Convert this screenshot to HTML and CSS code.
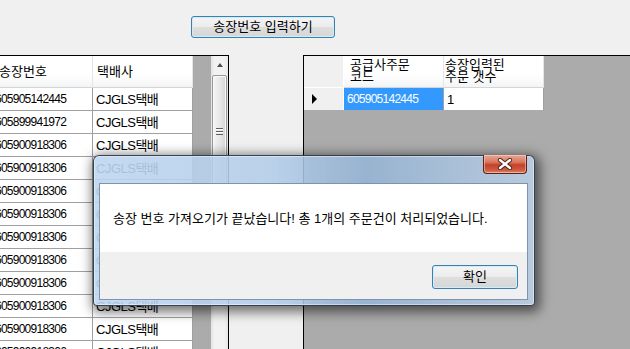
FILE: index.html
```html
<!doctype html>
<html>
<head>
    <title>송장번호 입력</title>

    <link rel="stylesheet" href="styles.css">
</head>
<body>
    <div class="toolbar">
      <button class="win-btn" id="btn-input">송장번호 입력하기</button>
    </div>

    <div class="panels">
      <div class="grid grid-left">
        <div class="grid-table">
          <div class="row head">
            <div class="cell c1">송장번호</div>
            <div class="cell c2">택배사</div>
          </div>
          <div class="row"><div class="cell c1">605905142445</div><div class="cell c2">CJGLS택배</div></div>
          <div class="row"><div class="cell c1">605899941972</div><div class="cell c2">CJGLS택배</div></div>
          <div class="row"><div class="cell c1">605900918306</div><div class="cell c2">CJGLS택배</div></div>
          <div class="row"><div class="cell c1">605900918306</div><div class="cell c2">CJGLS택배</div></div>
          <div class="row"><div class="cell c1">605900918306</div><div class="cell c2">CJGLS택배</div></div>
          <div class="row"><div class="cell c1">605900918306</div><div class="cell c2">CJGLS택배</div></div>
          <div class="row"><div class="cell c1">605900918306</div><div class="cell c2">CJGLS택배</div></div>
          <div class="row"><div class="cell c1">605900918306</div><div class="cell c2">CJGLS택배</div></div>
          <div class="row"><div class="cell c1">605900918306</div><div class="cell c2">CJGLS택배</div></div>
          <div class="row"><div class="cell c1">605900918306</div><div class="cell c2">CJGLS택배</div></div>
          <div class="row"><div class="cell c1">605900918306</div><div class="cell c2">CJGLS택배</div></div>
          <div class="row"><div class="cell c1">605900918306</div><div class="cell c2">CJGLS택배</div></div>
        </div>
        <div class="grid-fill"></div>
        <div class="scrollbar">
          <div class="sb-arrow"></div>
          <div class="sb-thumb">
            <div class="sb-grip"></div>
          </div>
        </div>
      </div>

      <div class="grid grid-right">
        <div class="grid-table">
          <div class="row head">
            <div class="cell rh"></div>
            <div class="cell c1 two">공급사주문<br>코드</div>
            <div class="cell c2 two">송장입력된<br>주문 갯수</div>
          </div>
          <div class="row">
            <div class="cell rh"><span class="arrow"></span></div>
            <div class="cell c1 selected">605905142445</div>
            <div class="cell c2">1</div>
          </div>
        </div>
      </div>
    </div>

    <div class="dialog">
      <div class="close-btn">
        <svg width="16" height="12" viewBox="0 0 16 12">
          <path d="M3 2 L13 10 M13 2 L3 10" stroke="#4a2018" stroke-width="4.2" stroke-linecap="round"/>
          <path d="M3 2 L13 10 M13 2 L3 10" stroke="#ffffff" stroke-width="2.4" stroke-linecap="round"/>
        </svg>
      </div>
      <div class="dialog-client">
        <div class="dialog-msg">송장 번호 가져오기가 끝났습니다! 총 1개의 주문건이 처리되었습니다.</div>
        <div class="dialog-foot">
          <button class="win-btn ok-btn">확인</button>
        </div>
      </div>
    </div>
</body>
</html>
```

FILE: styles.css
```css
* {
  margin: 0;
  padding: 0;
  box-sizing: border-box;
}
body {
  background-color: #f0f0f0;
  font-family: "Liberation Sans", "Noto Sans CJK KR", sans-serif;
  font-size: 13px;
  color: #000;
  overflow: hidden;
  height: 349px;
}
.toolbar {
  height: 55px;
  padding: 16px 0 0 191px;
}
.win-btn {
  font-family: "Liberation Sans", "Noto Sans CJK KR", sans-serif;
  font-size: 13px;
  line-height: 14px;
  color: #000;
  border: 1px solid #3c7fb1;
  border-radius: 3px;
  background: linear-gradient(#f4f4f4 0%, #ececec 48%, #dedede 52%, #d6d6d6 100%);
  box-shadow: inset 0 0 0 1px #cdeefb;
  cursor: pointer;
}
#btn-input {
  width: 144px;
  height: 22px;
}
.panels {
  display: flex;
  gap: 74px;
  height: 294px;
}
.grid {
  border-top: 1px solid #000;
  border-left: 1px solid #000;
  background-color: #ababab;
  display: flex;
  overflow: hidden;
}
.grid-left {
  margin-left: -8px;
  width: 237px;
  border-right: 1px solid #000;
}
.grid-right {
  flex: 1;
  margin-right: -4px;
  align-items: flex-start;
}
.row {
  display: flex;
  height: 23px;
}
.row.head {
  height: 32px;
}
.cell {
  width: 100px;
  height: 100%;
  display: flex;
  align-items: center;
  padding-left: 3px;
  background-color: #fff;
  border-right: 1px solid #a0a0a0;
  border-bottom: 1px solid #a0a0a0;
  line-height: 15px;
  white-space: nowrap;
  letter-spacing: -0.5px;
}
.grid-left .c1 {
  padding-left: 2px;
  font-size: 12px;
  letter-spacing: -0.75px;
}
.head .cell {
  background: linear-gradient(#ffffff 0%, #ffffff 60%, #f3f4f6 100%);
  border-right: 1px solid #e4e5e7;
  border-bottom: 1px solid #d5d5d5;
  letter-spacing: 0;
}
.grid-left .head .c1 {
  padding-left: 6px;
  font-size: 13px;
  letter-spacing: 0;
}
.grid-left .head .c2 {
  padding-left: 4px;
}
.head .two {
  line-height: 12px;
  align-items: flex-start;
  padding-top: 3px;
}
.grid-right .head .c1 {
  padding-left: 6px;
}
.grid-right .head .c2 {
  padding-left: 1px;
}
.grid-right .row:not(.head) .cell {
  border-bottom: none;
  height: 22px;
}
.cell.rh {
  width: 40px;
  background: #f0f0f0;
  border-right: 1px solid #fff;
  padding-left: 7px;
}
.head .cell.rh {
  background: #f0f0f0;
  border-right: 1px solid #fff;
  border-bottom: 1px solid #fff;
}
.arrow {
  width: 0;
  height: 0;
  border-left: 5px solid #000;
  border-top: 5px solid transparent;
  border-bottom: 5px solid transparent;
  margin-left: 1px;
}
.cell.selected {
  background-color: #3399ff;
  color: #fff;
  font-size: 12px;
  letter-spacing: -0.75px;
}
.grid-fill {
  width: 18px;
  flex-shrink: 0;
}
.scrollbar {
  width: 17px;
  flex-shrink: 0;
  background: linear-gradient(to right, #e3e3e3 0%, #f2f2f2 20%, #f2f2f2 80%, #e6e6e6 100%);
  padding: 0 1px;
}
.sb-arrow {
  height: 17px;
  display: flex;
  align-items: center;
  justify-content: center;
}
.sb-arrow::before {
  content: "";
  width: 0;
  height: 0;
  border-bottom: 4px solid #4d4d4d;
  border-left: 3px solid transparent;
  border-right: 3px solid transparent;
}
.sb-thumb {
  margin-top: 2px;
  height: 112px;
  border: 1px solid #979797;
  border-radius: 2px;
  background: linear-gradient(to right, #f5f5f5 0%, #e8e8e8 50%, #d6d6d6 100%);
  box-shadow: inset 0 0 0 1px #fbfbfb;
  display: flex;
  align-items: center;
  justify-content: center;
}
.sb-grip {
  width: 7px;
  height: 7px;
  background: repeating-linear-gradient(#5f5f5f 0 1px, #fff 1px 2px, transparent 2px 3px);
}
.dialog {
  position: absolute;
  left: 93px;
  top: 155px;
  width: 442px;
  height: 151px;
  padding: 27px 6px 5px 5px;
  border: 1px solid rgba(30, 40, 55, 0.85);
  border-radius: 6px 6px 4px 4px;
  background: linear-gradient(to right, rgba(190, 214, 240, 0.9) 0%, rgba(178, 204, 232, 0.88) 40%, rgba(150, 180, 212, 0.9) 62%, rgba(185, 205, 226, 0.9) 100%);
  box-shadow: 0 0 0 1px rgba(255, 255, 255, 0.45) inset, 2px 3px 12px 3px rgba(0, 0, 0, 0.55);
}
.close-btn {
  position: absolute;
  top: -1px;
  right: 7px;
  width: 44px;
  height: 19px;
  border: 1px solid #5a2218;
  border-top: none;
  border-radius: 0 0 4px 4px;
  background: linear-gradient(#e9a896 0%, #d9765f 40%, #c5402a 55%, #cf5d43 85%, #e08a70 100%);
  box-shadow: inset 0 0 0 1px rgba(255, 220, 210, 0.5);
  display: flex;
  align-items: center;
  justify-content: center;
}
.dialog-client {
  height: 117px;
  border: 1px solid #7e93ad;
  background-color: #f0f0f0;
}
.dialog-msg {
  height: 68px;
  background-color: #fff;
  display: flex;
  align-items: center;
  padding-left: 13px;
  padding-top: 1px;
  line-height: 15px;
  white-space: nowrap;
}
.dialog-foot {
  display: flex;
  justify-content: flex-end;
  padding: 13px 9px 0 0;
}
.ok-btn {
  width: 86px;
  height: 24px;
}
```
